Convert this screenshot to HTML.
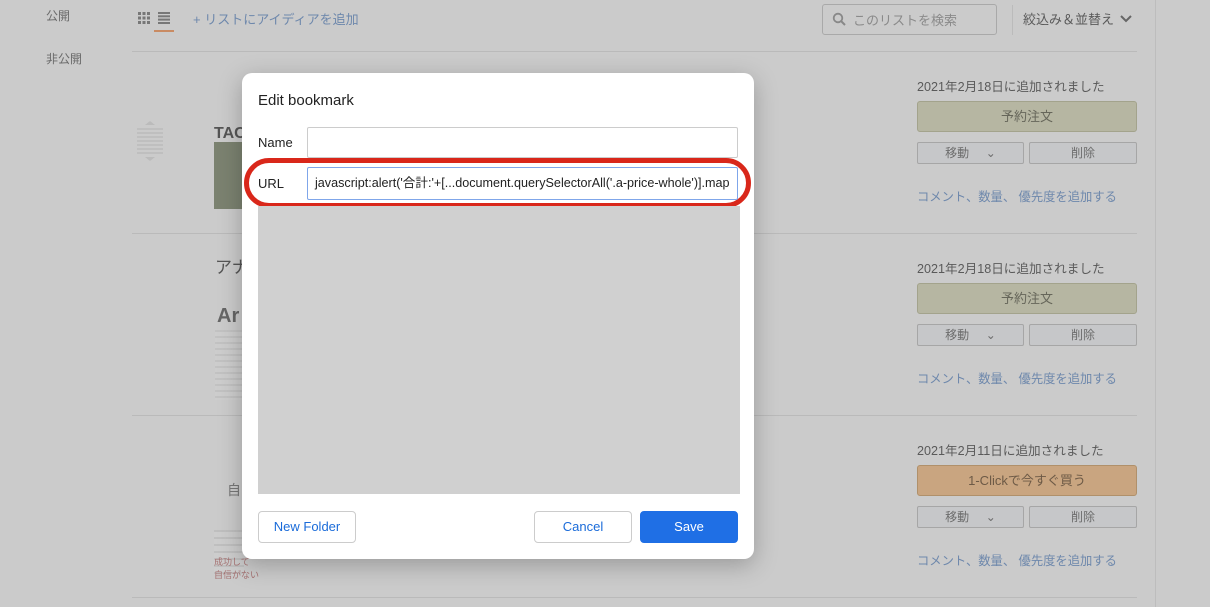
<!DOCTYPE html>
<html><head><meta charset="utf-8"><style>
*{box-sizing:border-box;margin:0;padding:0}
body{width:1210px;height:607px;background:#cbcbcb;position:relative;overflow:hidden;font-family:"Liberation Sans","Noto Sans CJK JP",sans-serif;color:#555}
.a{position:absolute}
.t{font-size:12px;color:#6a6a6a}
.hr{position:absolute;left:132px;width:1005px;height:1px;background:#bababa}
.date{position:absolute;left:917px;font-size:12.6px;color:#5a5a5a}
.btn{position:absolute;left:917px;width:220px;height:31px;border:1px solid #a3a38c;border-radius:3px;background:#b6b6a2;text-align:center;line-height:29px;font-size:13px;color:#66665a}
.sm{position:absolute;height:22px;border:1px solid #a6a6a6;border-radius:2px;background:#c6c7c9;text-align:center;line-height:20px;font-size:12px;color:#6c6c6c}
.lnk{position:absolute;left:917px;font-size:12.3px;color:#6e88ac}
.dlg{position:absolute;left:242px;top:73px;width:512px;height:486px;background:#fff;border-radius:10px;box-shadow:0 6px 24px rgba(0,0,0,.25)}
.inp{position:absolute;left:65px;width:431px;border:1px solid #ccc;border-radius:2px;background:#fff}
.b{position:absolute;top:438px;width:98px;height:32px;border:1px solid #ccc;border-radius:4px;background:#fff;text-align:center;line-height:30px;font-size:13px;color:#1a6bd9}
</style></head><body>
<div class="a t" style="left:46px;top:7px">公開</div>
<div class="a t" style="left:46px;top:50px">非公開</div>
<svg class="a" style="left:138px;top:12px" width="12" height="12"><g fill="#777"><rect x="0" y="0" width="3" height="3"/><rect x="4.5" y="0" width="3" height="3"/><rect x="9" y="0" width="3" height="3"/><rect x="0" y="4.5" width="3" height="3"/><rect x="4.5" y="4.5" width="3" height="3"/><rect x="9" y="4.5" width="3" height="3"/><rect x="0" y="9" width="3" height="3"/><rect x="4.5" y="9" width="3" height="3"/><rect x="9" y="9" width="3" height="3"/></g></svg>
<svg class="a" style="left:158px;top:12px" width="12" height="12"><g fill="#777"><rect y="0" width="12" height="2"/><rect y="3.3" width="12" height="2"/><rect y="6.6" width="12" height="2"/><rect y="10" width="12" height="2"/></g></svg>
<div class="a" style="left:154px;top:30px;width:20px;height:2px;background:#c98b63"></div>
<div class="a" style="left:193px;top:9px;font-size:13px;color:#6e88ac">+ リストにアイディアを追加</div>
<div class="a" style="left:822px;top:4px;width:175px;height:31px;border:1px solid #a9a9a9;border-radius:3px"></div>
<svg class="a" style="left:832px;top:12px" width="14" height="14"><circle cx="6" cy="6" r="4.3" stroke="#888" stroke-width="1.8" fill="none"/><path d="M9 9l4 4" stroke="#888" stroke-width="2"/></svg>
<div class="a" style="left:853px;top:10px;font-size:13px;color:#8a8a8a">このリストを検索</div>
<div class="a" style="left:1012px;top:5px;width:1px;height:30px;background:#bbb"></div>
<div class="a" style="left:1023px;top:9px;font-size:13px;color:#5a5a5a">絞込み＆並替え</div>
<svg class="a" style="left:1120px;top:15px" width="12" height="8"><path d="M1 1l5 5 5-5" stroke="#666" stroke-width="2" fill="none"/></svg>
<div class="a" style="left:1155px;top:0;width:1px;height:607px;background:#bdbdbd"></div>
<div class="hr" style="top:51px"></div><div class="hr" style="top:233px"></div><div class="hr" style="top:415px"></div><div class="hr" style="top:597px"></div>
<svg class="a" style="left:137px;top:120px" width="26" height="44"><path d="M8 5l5-4 5 4z" fill="#bbb"/><g fill="#bfbfbf"><rect y="8" width="26" height="2"/><rect y="12" width="26" height="2"/><rect y="16" width="26" height="2"/><rect y="20" width="26" height="2"/><rect y="24" width="26" height="2"/><rect y="28" width="26" height="2"/><rect y="32" width="26" height="2"/></g><path d="M8 37l5 4 5-4z" fill="#bbb"/></svg>
<div class="a" style="left:214px;top:125px;width:30px;height:16px;font-weight:bold;font-size:16px;color:#555;overflow:hidden">TACT</div>
<div class="a" style="left:214px;top:142px;width:30px;height:67px;background:#7b8270"></div>
<div class="a" style="left:215px;top:253px;font-size:17px;color:#555">アナ</div>
<div class="a" style="left:217px;top:305px;font-size:20px;font-weight:bold;color:#666">Ar</div>
<div class="a" style="left:215px;top:330px;width:28px;height:70px;background:repeating-linear-gradient(#c2c2c2 0 2px,#cdcdcd 2px 6px)"></div>
<div class="a" style="left:227px;top:480px;font-size:14px;color:#777">自</div>
<div class="a" style="left:214px;top:530px;width:30px;height:45px;background:repeating-linear-gradient(#bfbfbf 0 2px,#cdcdcd 2px 7px)"></div>
<div class="a" style="left:214px;top:555px;font-size:9px;color:#a57070">成功して<br>自信がない</div>

<div class="date" style="top:76px">2021年2月18日に追加されました</div>
<div class="btn" style="top:101px">予約注文</div>
<div class="sm" style="left:917px;top:142px;width:107px">移動 &nbsp; &nbsp; ⌄</div>
<div class="sm" style="left:1029px;top:142px;width:108px">削除</div>
<div class="lnk" style="top:187px">コメント、数量、 優先度を追加する</div>
<div class="date" style="top:258px">2021年2月18日に追加されました</div>
<div class="btn" style="top:283px">予約注文</div>
<div class="sm" style="left:917px;top:324px;width:107px">移動 &nbsp; &nbsp; ⌄</div>
<div class="sm" style="left:1029px;top:324px;width:108px">削除</div>
<div class="lnk" style="top:369px">コメント、数量、 優先度を追加する</div>
<div class="date" style="top:440px">2021年2月11日に追加されました</div>
<div class="btn" style="top:465px;background:#c9a580;border-color:#b0906a;color:#6d5a46">1-Clickで今すぐ買う</div>
<div class="sm" style="left:917px;top:506px;width:107px">移動 &nbsp; &nbsp; ⌄</div>
<div class="sm" style="left:1029px;top:506px;width:108px">削除</div>
<div class="lnk" style="top:551px">コメント、数量、 優先度を追加する</div>

<div class="dlg">
<div class="a" style="left:16px;top:19px;font-size:15px;color:#222">Edit bookmark</div>
<div class="a" style="left:16px;top:62px;font-size:13px;color:#222">Name</div>
<div class="inp" style="top:54px;height:31px"></div>
<div class="a" style="left:2px;top:85px;width:507px;height:50px;border:5px solid #d9271a;border-radius:25px"></div>
<div class="a" style="left:16px;top:103px;font-size:13px;color:#222">URL</div>
<div class="inp" style="top:94px;height:33px;border:1px solid #7fa6ea;font-size:12.6px;color:#222;padding:0 0 0 7px;line-height:31px;white-space:nowrap;overflow:hidden">javascript:alert('合計:'+[...document.querySelectorAll('.a-price-whole')].map</div>
<div class="a" style="left:16px;top:133px;width:482px;height:288px;background:#d0d0d0"></div>
<div class="b" style="left:16px">New Folder</div>
<div class="b" style="left:292px;color:#1a6bd9">Cancel</div>
<div class="b" style="left:398px;background:#1f6fe5;border-color:#1f6fe5;color:#fff">Save</div>
</div>
</body></html>
